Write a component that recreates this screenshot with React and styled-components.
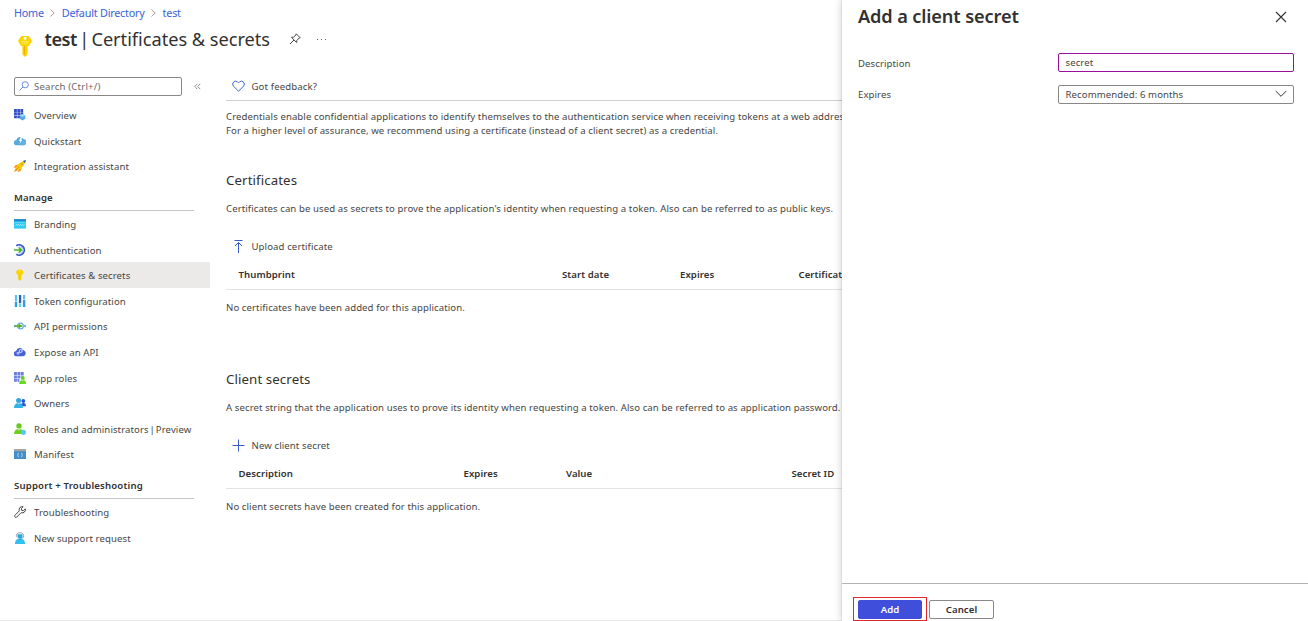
import React from "react";
import styled, { createGlobalStyle } from "styled-components";

const Global = createGlobalStyle`
  * { box-sizing: border-box; }
  html, body { margin: 0; padding: 0; background: #fff; overflow: hidden; }
  body { font-family: "Noto Sans", "Open Sans", sans-serif; font-size: 9.6px; letter-spacing: .085px; color: #484644; }
  svg { display: block; flex: none; }
  h1, h2, p { margin: 0; font-weight: 400; }
  button, input { font: inherit; color: inherit; letter-spacing: inherit; }
`;

const Shell = styled.div`
  display: grid;
  grid-template-columns: 842px 466px;
  width: 1308px;
  height: 621px;
  overflow: hidden;
`;
const Main = styled.main`
  min-width: 0;
  overflow: hidden;
  border-bottom: 1px solid #eaeaea;
  white-space: nowrap;
`;
const Crumbs = styled.nav`
  display: flex;
  align-items: center;
  height: 26px;
  padding: 0 0 1px 14px;
  gap: 6.5px;
  font-size: 10.8px;
  letter-spacing: -.22px;
  a { color: #3a62d6; }
`;
const TitleBar = styled.header`
  display: flex;
  align-items: flex-start;
  height: 43px;
  padding: 7px 0 0 15px;
`;
const TitleGroup = styled.div`
  display: flex;
  align-items: center;
  height: 28px;
  margin: -8px 0 0 9.600px;
`;
const Title = styled.h1`
  font-size: 18.2px;
  line-height: 28px;
  letter-spacing: -.02px;
  color: #323130;
  b { font-weight: 600; letter-spacing: -.5px; }
`;
const Pipe = styled.span`
  margin: 0 ${(p) => p.$pull};
`;
const TitleActions = styled.div`
  display: flex;
  align-items: center;
  gap: 14.500px;
  margin-left: 19px;
`;
const Columns = styled.div`
  display: grid;
  grid-template-columns: 210px 632px;
  padding-top: 8px;
`;
const Side = styled.aside``;
const SearchRow = styled.div`
  display: flex;
  align-items: center;
  gap: 11.5px;
  height: 19px;
  padding-left: 14px;
  margin-bottom: 6px;
`;
const SearchBox = styled.div`
  display: flex;
  align-items: center;
  gap: 5px;
  width: 168px;
  height: 19px;
  padding: 0 0 1px 4px;
  border: 1px solid #8a8886;
  border-radius: 2px;
  color: #6b6967;
  letter-spacing: .2px;
`;
const MenuItem = styled.div`
  display: flex;
  align-items: center;
  gap: 8px;
  height: 25.6px;
  padding-left: 14px;
  background: ${(p) => (p.$active ? "#ebeae8" : "transparent")};
  svg { margin-top: .4px; }
`;
const MenuLabel = styled.span`
  padding-top: 1.600px;
`;
const SectionTitle = styled.div`
  display: flex;
  align-items: center;
  width: 180px;
  height: 32px;
  margin: 0 0 .2px 14px;
  padding-top: 7px;
  border-bottom: 1px solid #c8c6c4;
  font-weight: 600;
  letter-spacing: .17px;
  color: #323130;
`;
const Content = styled.section`
  padding-left: 16px;
`;
const Command = styled.div`
  display: flex;
  align-items: center;
  gap: 6.5px;
  height: 20px;
  padding-left: 6px;
  letter-spacing: .1px;
`;
const CommandBar = styled.div`
  height: 24px;
  border-bottom: 1px solid #d2d0ce;
  ${Command} { height: 18px; letter-spacing: .13px; }
`;
const Text = styled.p`
  line-height: 14.4px;
`;
const Intro = styled.div`
  height: 69px;
  padding-top: 9px;
`;
const Block = styled.section`
  height: 199px;
`;
const Heading = styled.h2`
  height: 20px;
  margin-bottom: 12px;
  font-size: 13.3px;
  line-height: 20px;
  color: #323130;
`;
const Commands = styled.div`
  margin-top: 20px;
`;
const HeadRow = styled.div`
  display: grid;
  grid-template-columns: ${(p) => p.$cols};
  align-items: center;
  height: 34px;
  padding: 4px 0 0 12.5px;
  margin-bottom: 11px;
  border-bottom: 1px solid #e4e3e1;
  font-weight: 600;
  letter-spacing: .06px;
  color: #323130;
`;
const Panel = styled.aside`
  display: flex;
  flex-direction: column;
  min-width: 0;
  background: #fff;
  box-shadow: 0 0 8px rgba(0, 0, 0, .22), 0 0 1px rgba(0, 0, 0, .25);
  z-index: 1;
`;
const PanelHead = styled.header`
  display: flex;
  align-items: center;
  justify-content: space-between;
  height: 34px;
  padding: 0 21px 0 16px;
`;
const PanelTitle = styled.h2`
  padding-bottom: 2px;
  font-size: 18.2px;
  font-weight: 600;
  line-height: 28px;
  letter-spacing: -.13px;
  color: #323130;
`;
const Form = styled.div`
  flex: 1;
  display: flex;
  flex-direction: column;
  gap: 12px;
  padding: 19px 14px 0 16px;
`;
const Field = styled.label`
  display: grid;
  grid-template-columns: 200px 236px;
  align-items: center;
  height: 20px;
  margin-bottom: -1px;
`;
const Box = styled.div`
  display: flex;
  align-items: center;
  align-self: ${(p) => (p.$focus ? "start" : "center")};
  justify-content: space-between;
  height: 19px;
  padding: 0 6px 0 6.5px;
  border: 1px solid ${(p) => (p.$focus ? "#9b0f9f" : "#8a8886")};
  border-radius: 2px;
`;
const Footer = styled.footer`
  display: flex;
  align-items: center;
  gap: 2px;
  height: 38px;
  padding: 13px 0 0 11px;
  border-top: 1px solid #b5b3b1;
`;
const Callout = styled.div`
  width: 74px;
  height: 24px;
  padding: 2px 4px 0;
  border: 1px solid #e3262e;
`;
const Button = styled.button`
  display: block;
  width: ${(p) => (p.$primary ? "64px" : "65px")};
  height: 19px;
  padding: 0;
  border: 1px solid ${(p) => (p.$primary ? "#3f4edb" : "#8a8886")};
  border-radius: 2px;
  background: ${(p) => (p.$primary ? "#3f4edb" : "#fff")};
  color: ${(p) => (p.$primary ? "#fff" : "#323130")};
  font-weight: 600;
  line-height: 17px;
`;

const Svg = ({ w = 12, h = w, box = "0 0 12 12", children }) => (
  <svg width={w} height={h} viewBox={box} fill="none">{children}</svg>
);

const icons = {
  overview: (
    <Svg>
      <path fill="#3251c4" d="M0 0h2.900v2.900H0zM3.300 0h2.700v2.900H3.300zM6.400 0H9.200v2.900H6.400zM0 3.300h2.900v2.700H0zM3.300 3.300H6v2.700H3.300zM6.400 3.300H9.200v2.700H6.400zM0 6.400h2.900V9.200H0zM3.300 6.400H6V9.200H3.300z" />
      <path fill="#58a9e0" d="m8.500 5 2.800 1.500v3.300L8.500 11.400 5.700 9.800V6.500z" />
      <path fill="#9dd7f4" d="m8.500 5 2.800 1.500-2.800 1.500-2.800-1.500z" />
    </Svg>
  ),
  quickstart: (
    <Svg>
      <path fill="#59a9db" d="M2.600 10.200A2.600 2.600 0 0 1 2.300 5 3.700 3.700 0 0 1 9.300 4.200 3 3 0 0 1 9.400 10.200z" />
      <path fill="#fff" d="M7 1.500 5 6h1.500l-1.200 3 3-3.800H7.200l1.300-3.700z" />
      <path fill="#62b2e2" d="M8.800 2.900 8.100 4.500h1.800L6.200 10.200h3.200A3 3 0 0 0 12 7.200c0-2-1-2.400-1.800-2.700z" />
    </Svg>
  ),
  rocket: (
    <Svg>
      <path fill="#f78d1e" d="M4.300 4.200 1 5.500 0 8l2.600-.6zM7.900 7.800 6.500 11 4 12l.6-2.600z" />
      <path fill="#f9a01c" d="M2 7.500 0 12l4.500-2z" />
      <path fill="#fcc70a" d="M10.500.9C7.300 1.100 3.300 4.300 1.700 8.200L3.900 10.300C7.600 8.600 10.900 4.700 11.100 1.500z" />
      <path fill="#1c4f9c" d="M11.900.1 8.900.9l2.200 2.200z" />
      <circle cx="8" cy="4" r=".7" fill="#6a9c7c" />
      <path d="m1.200 10.800 4-4" stroke="#e88600" strokeWidth=".8" />
    </Svg>
  ),
  branding: (
    <Svg>
      <path fill="#32c8ef" d="M0 3h12v7.600H0z" />
      <path fill="#1b87cf" d="M0 1.100h12V3.300H0z" />
      <path d="M1 4.600h10" stroke="#7fe0f8" strokeWidth=".6" />
      <path d="m1.500 7.400 1-.8 1 .8 1-.8 1 .8 1-.8 1 .8 1-.8 1 .8 1-.8" stroke="#d6f7ff" strokeWidth=".8" />
    </Svg>
  ),
  auth: (
    <Svg>
      <path d="M2.300 1.800A5.100 5.100 0 1 1 2.300 10.200" stroke="#3458c9" strokeWidth="1.700" />
      <path d="M3.600 3.800A3.100 3.100 0 1 1 3.600 8.200" stroke="#9db9f2" strokeWidth=".9" />
      <path d="M0 6h7.200M4.900 3.600 7.500 6 4.900 8.400" stroke="#43b820" strokeWidth="1.500" />
    </Svg>
  ),
  key: (
    <Svg>
      <path fillRule="evenodd" fill="#fbd300" d="M4.200.4h3c.5 0 .8.2 1 .6l1.200 1.800c.2.4.2.8 0 1.100L8.200 5.800c-.2.300-.5.500-.8.600v3.900L5.800 12 4.200 10.500V6.400c-.3-.1-.600-.3-.8-.600L2.200 3.900c-.2-.3-.2-.700 0-1.100L3.200 1c.2-.4.500-.6 1-.6ZM5.800 1.200a.6.6 0 1 0 0 1.200.6.6 0 0 0 0-1.200Z" />
      <path d="M5.300 6.500v3.800" stroke="#efb600" strokeWidth=".5" />
    </Svg>
  ),
  token: (
    <Svg>
      <path fill="#57c6ee" d="M.9 0h2.200v6.600H.9zM9 0h2.200v4.600H9z" />
      <path fill="#2f59cc" d="M4.900 0h2.300v8.200H4.900z" />
      <path fill="#2f9fe0" d="M.8 6.900h2.400V12H.8zM8.900 4.900h2.400V12H8.900z" />
      <path fill="#5dd1f4" d="M4.900 8.700h2.300V12H4.900z" />
    </Svg>
  ),
  api: (
    <Svg>
      <path d="M0 6h2M10 6h2" stroke="#4d9bdc" strokeWidth="1.300" />
      <circle cx="6.400" cy="6" r="2.900" stroke="#6da8de" strokeWidth="1.200" />
      <path d="M.5 6h6M4.700 4.200 6.700 6 4.700 7.800" stroke="#4cb51d" strokeWidth="1.400" />
      <circle cx="7.200" cy="6" r=".9" fill="#4cb51d" />
    </Svg>
  ),
  expose: (
    <Svg>
      <path fill="#4762d8" d="M2.700 10.200A2.600 2.600 0 0 1 2.200 5a4 4 0 0 1 7.600-.4 2.900 2.900 0 0 1-.4 5.600z" />
      <circle cx="6.700" cy="5" r="1.500" stroke="#e8efff" strokeWidth=".9" />
      <circle cx="4" cy="7.300" r="1" stroke="#dce5ff" strokeWidth=".9" />
      <path d="m8 4 1-1M5 6.600l.7-.5" stroke="#fff" strokeWidth=".7" />
    </Svg>
  ),
  roles: (
    <Svg>
      <path fill="#6a7ee3" d="M0 0h2.900v2.900H0zM3.400 0h2.900v2.900H3.400zM6.800 0h2.900v2.900H6.800zM0 3.400h2.900v2.900H0zM3.400 3.400h2.900v2.900H3.400zM0 6.800h2.900v2.900H0zM3.400 6.800h2v2.900h-2zM6.800 3.400h2.900v1H6.800z" />
      <circle cx="8.700" cy="6" r="2" fill="#64cf20" />
      <path fill="#64d91f" d="M5.100 12c.2-2.600 1.400-4 3.600-4s3.300 1.400 3.400 4z" />
      <path fill="#d8f8c7" d="m7.900 8.200.8 1.200.8-1.200z" />
    </Svg>
  ),
  owners: (
    <Svg>
      <circle cx="9.300" cy="4" r="1.900" fill="#3251d1" />
      <path fill="#3251d1" d="M6.700 9.300c.1-2.300 1-3.400 2.700-3.400S11.900 7 12 9.300z" />
      <circle cx="4.600" cy="3.400" r="2.500" fill="#2fa5dc" />
      <path fill="#2fb4e8" d="M0 10.900C.2 7.400 1.600 6 4.600 6s4.100 1.400 4.300 4.900z" />
      <path fill="#d9f4ff" d="m3.600 6 1 1.600 1-1.600z" />
    </Svg>
  ),
  admin: (
    <Svg>
      <circle cx="5" cy="2.900" r="2.700" fill="#69c91f" />
      <path fill="#69d01f" d="M0 11c.2-3.500 1.900-5 5-5s4.700 1.500 5 5z" />
      <path fill="#e1f8cf" d="m3.900 6 1.100 1.700L6.100 6z" />
      <path fill="#55c9ef" d="m9.500 6.700 2.400 1v2c0 1.200-1 1.900-2.400 2.300C8.100 11.600 7.100 10.900 7.100 9.700v-2z" />
    </Svg>
  ),
  manifest: (
    <Svg>
      <path fill="#448fca" d="M0 3h12v8H0z" />
      <path fill="#a5a5a5" d="M0 1h12v2.200H0z" />
      <path d="M4.700 5c-.8 0-.4 1.400-1.200 2 .8.600.4 2 1.200 2M7.300 5c.8 0 .4 1.400 1.200 2-.8.600-.4 2-1.200 2" stroke="#cfe7f8" strokeWidth=".8" />
    </Svg>
  ),
  wrench: (
    <Svg>
      <path d="M11.300 2.800 9.500 4.600 7.600 4.300l-.2-1.900L9.100.7a3.200 3.200 0 0 0-3.800 4.200L.8 9.400a1.300 1.300 0 0 0 1.800 1.800L7.100 6.700a3.200 3.200 0 0 0 4.200-3.900Z" stroke="#3b3a39" strokeWidth=".95" />
    </Svg>
  ),
  support: (
    <Svg>
      <path d="M2.400 4.800V3.300C2.700-.2 9.300-.2 9.600 3.300v2L7.700 6.600" stroke="#7b8c96" strokeWidth=".8" />
      <path fill="#29a9dd" d="M3.500 2.300h5v2a2.500 2.500 0 0 1-5 0z" />
      <path fill="#34c0ee" d="M1 12c.1-3.700 1.300-5.300 5-5.300s4.900 1.600 5 5.300z" />
      <path fill="#1c8fc8" d="m4.800 6.700 1.200 1.400 1.200-1.400z" />
    </Svg>
  ),
};

const Chevron = () => (
  <Svg w={5} h={8} box="0 0 5 8"><path d="m.5.5 3.700 3.500L.5 7.500" stroke="#8a8886" strokeWidth=".8" /></Svg>
);

const general = [["overview", "Overview"], ["quickstart", "Quickstart"], ["rocket", "Integration assistant"]];
const manage = [
  ["branding", "Branding"],
  ["auth", "Authentication"],
  ["key", "Certificates & secrets"],
  ["token", "Token configuration"],
  ["api", "API permissions"],
  ["expose", "Expose an API"],
  ["roles", "App roles"],
  ["owners", "Owners"],
  ["admin", <>Roles and administrators <Pipe $pull="-1.7px">|</Pipe> Preview</>],
  ["manifest", "Manifest"],
];
const support = [["wrench", "Troubleshooting"], ["support", "New support request"]];

const Menu = ({ items }) => items.map(([icon, label]) => (
  <MenuItem key={icon} $active={icon === "key"}>{icons[icon]}<MenuLabel>{label}</MenuLabel></MenuItem>
));

export default function App() {
  return (
    <Shell>
      <Global />
      <Main>
        <Crumbs>
          <a>Home</a><Chevron /><a>Default Directory</a><Chevron /><a>test</a>
        </Crumbs>
        <TitleBar>
          <Svg w={20} h={24} box="0 -1 20 24">
            <path fillRule="evenodd" fill="#fbd500" d="M7.200 2h5.600c.8 0 1.300.3 1.700 1l2 3.100c.4.600.4 1.300 0 1.900l-1.900 3c-.3.600-.8.900-1.500.9h-.5v8.700L10 23l-2.600-2.400v-8.700h-.5c-.7 0-1.200-.3-1.500-.9L3.500 8c-.4-.6-.4-1.300 0-1.900L5.500 3c.4-.7.900-1 1.700-1Zm2.800.8a1.500 1.500 0 1 0 0 3 1.500 1.500 0 0 0 0-3Z" />
            <path d="M6.500 7.600h7M6.500 9.200h7" stroke="#ffed7d" strokeWidth=".8" />
            <path d="M9.300 11.900v8.700" stroke="#eda900" strokeWidth="1" />
          </Svg>
          <TitleGroup>
            <Title><b>test</b> <Pipe $pull="-2.5px">|</Pipe> Certificates &amp; secrets</Title>
            <TitleActions>
              <Svg w={12} h={12}>
                <path d="m7.200.8 4 4-1 .2-2.300 2.300-.3 2.200-5.100-5.100 2.200-.3L7 1.800zM5 7 1 11" stroke="#3b3a39" strokeWidth=".95" />
              </Svg>
              <Svg w={11} h={3} box="0 0 11 3"><path fill="#605e5c" d="M1 1h1v1H1zM5 1h1v1H5zM9 1h1v1H9z" /></Svg>
            </TitleActions>
          </TitleGroup>
        </TitleBar>
        <Columns>
          <Side>
            <SearchRow>
              <SearchBox>
                <Svg w={10} h={10}><circle cx="7.500" cy="4.500" r="3.700" stroke="#4b76c8" /><path d="M4.800 7.200.7 11.300" stroke="#4b76c8" /></Svg>
                <span>Search (Ctrl+/)</span>
              </SearchBox>
              <Svg w={7} h={7} box="0 0 7 7"><path d="M3.300.8.8 3.500l2.500 2.700M6.200.8 3.700 3.500l2.500 2.700" stroke="#605e5c" strokeWidth=".7" /></Svg>
            </SearchRow>
            <Menu items={general} />
            <SectionTitle>Manage</SectionTitle>
            <Menu items={manage} />
            <SectionTitle>Support + Troubleshooting</SectionTitle>
            <Menu items={support} />
          </Side>
          <Content>
            <CommandBar>
              <Command>
                <Svg w={13} h={12} box="0 0 13 12"><path d="M6.500 11.200 1.300 6A3 3 0 0 1 5.500 1.800l1 1 1-1A3 3 0 0 1 11.700 6z" stroke="#3865d2" strokeWidth="1" /></Svg>
                <span>Got feedback?</span>
              </Command>
            </CommandBar>
            <Intro>
              <Text>Credentials enable confidential applications to identify themselves to the authentication service when receiving tokens at a web addressable location</Text>
              <Text>For a higher level of assurance, we recommend using a certificate (instead of a client secret) as a credential.</Text>
            </Intro>
            <Block>
              <Heading>Certificates</Heading>
              <Text>Certificates can be used as secrets to prove the application's identity when requesting a token. Also can be referred to as public keys.</Text>
              <Commands>
                <Command>
                  <Svg w={13} h={13} box="0 0 13 13"><path d="M2.500.5h8M6.500 13V2.500M3 6l3.500-3.500L10 6" stroke="#3b5bd0" /></Svg>
                  <span>Upload certificate</span>
                </Command>
              </Commands>
              <HeadRow $cols="323.500px 118px 118.500px 1fr">
                <span>Thumbprint</span><span>Start date</span><span>Expires</span><span>Certificate ID</span>
              </HeadRow>
              <Text>No certificates have been added for this application.</Text>
            </Block>
            <Block>
              <Heading>Client secrets</Heading>
              <Text>A secret string that the application uses to prove its identity when requesting a token. Also can be referred to as application password.</Text>
              <Commands>
                <Command>
                  <Svg w={13} h={13} box="0 0 13 13"><path d="M.5 6.500h12M6.500.5v12" stroke="#3b5bd0" /></Svg>
                  <span>New client secret</span>
                </Command>
              </Commands>
              <HeadRow $cols="225px 102.500px 225.500px 1fr">
                <span>Description</span><span>Expires</span><span>Value</span><span>Secret ID</span>
              </HeadRow>
              <Text>No client secrets have been created for this application.</Text>
            </Block>
          </Content>
        </Columns>
      </Main>
      <Panel>
        <PanelHead>
          <PanelTitle>Add a client secret</PanelTitle>
          <Svg w={12} h={12}><path d="m1 1 10 10M11 1 1 11" stroke="#323130" strokeWidth="1.100" /></Svg>
        </PanelHead>
        <Form>
          <Field><span>Description</span><Box $focus><span>secret</span></Box></Field>
          <Field>
            <span>Expires</span>
            <Box>
              <span>Recommended: 6 months</span>
              <Svg w={12} h={8} box="0 0 12 8"><path d="m.7 1 5.300 5.300L11.300 1" stroke="#323130" /></Svg>
            </Box>
          </Field>
        </Form>
        <Footer>
          <Callout><Button $primary>Add</Button></Callout>
          <Button>Cancel</Button>
        </Footer>
      </Panel>
    </Shell>
  );
}
